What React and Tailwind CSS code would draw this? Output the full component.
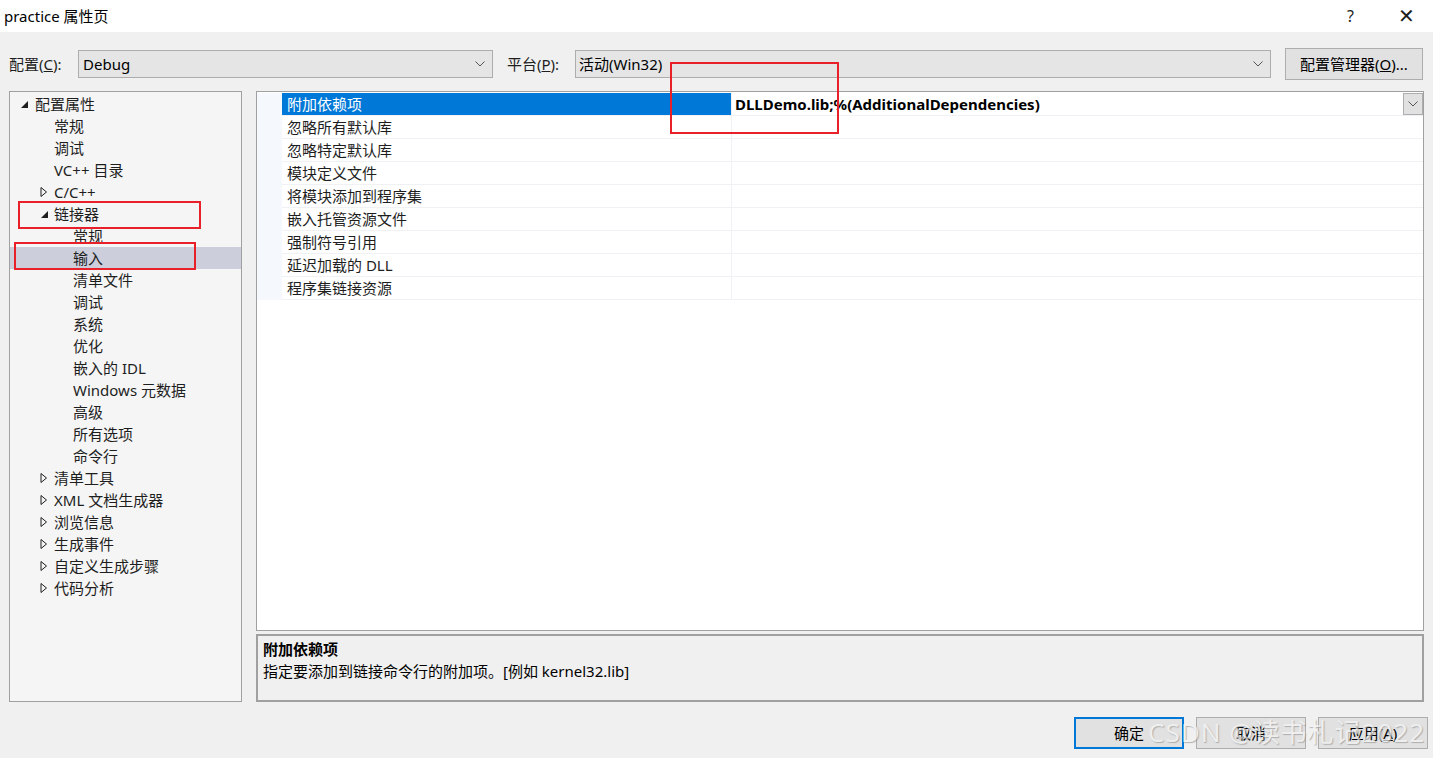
import React from 'react';

const font = { fontFamily: '"Noto Sans", "Noto Sans CJK SC", sans-serif' };

const Chevron = ({ className = '' }) => (
  <svg width="10" height="6" viewBox="0 0 10 6" className={className}>
    <path d="M0.5 0.5 L5 5 L9.5 0.5" fill="none" stroke="#555" strokeWidth="1" />
  </svg>
);

const Expanded = () => (
  <svg width="9" height="9" viewBox="0 0 9 9">
    <path d="M8 1 L8 8 L1 8 Z" fill="#1e1e1e" />
  </svg>
);

const Collapsed = () => (
  <svg width="8" height="10" viewBox="0 0 8 10">
    <path d="M1 0.5 L6.5 5 L1 9.5 Z" fill="none" stroke="#1e1e1e" strokeWidth="1" />
  </svg>
);

const tree = [
  { label: '配置属性', level: 0, icon: 'open' },
  { label: '常规', level: 1 },
  { label: '调试', level: 1 },
  { label: 'VC++ 目录', level: 1 },
  { label: 'C/C++', level: 1, icon: 'closed' },
  { label: '链接器', level: 1, icon: 'open' },
  { label: '常规', level: 2 },
  { label: '输入', level: 2, selected: true },
  { label: '清单文件', level: 2 },
  { label: '调试', level: 2 },
  { label: '系统', level: 2 },
  { label: '优化', level: 2 },
  { label: '嵌入的 IDL', level: 2 },
  { label: 'Windows 元数据', level: 2 },
  { label: '高级', level: 2 },
  { label: '所有选项', level: 2 },
  { label: '命令行', level: 2 },
  { label: '清单工具', level: 1, icon: 'closed' },
  { label: 'XML 文档生成器', level: 1, icon: 'closed' },
  { label: '浏览信息', level: 1, icon: 'closed' },
  { label: '生成事件', level: 1, icon: 'closed' },
  { label: '自定义生成步骤', level: 1, icon: 'closed' },
  { label: '代码分析', level: 1, icon: 'closed' },
];

const props = [
  '附加依赖项',
  '忽略所有默认库',
  '忽略特定默认库',
  '模块定义文件',
  '将模块添加到程序集',
  '嵌入托管资源文件',
  '强制符号引用',
  '延迟加载的 DLL',
  '程序集链接资源',
];

const TreeRow = ({ item }) => {
  const indent = item.level === 0 ? 'pl-[10px]' : item.level === 1 ? 'pl-[30px]' : 'pl-[49px]';
  return (
    <div className={`flex h-[22px] items-center ${indent} ${item.selected ? 'bg-[#cccedb]' : ''}`}>
      <span className="flex w-[13px] items-center">
        {item.icon === 'open' && <Expanded />}
        {item.icon === 'closed' && <Collapsed />}
      </span>
      <span className={`${item.level === 0 ? 'ml-[2px]' : 'ml-[1px]'} text-[15px] leading-none text-[#1e1e1e]`}>
        {item.label}
      </span>
    </div>
  );
};

const Button = ({ children, primary }) => (
  <button
    className={`h-[32px] w-[110px] text-[15px] text-black ${
      primary ? 'border-2 border-[#0078d7] bg-[#e1e1e1]' : 'border border-[#adadad] bg-[#e1e1e1]'
    }`}
  >
    {children}
  </button>
);

export default function App() {
  return (
    <div className="relative flex h-[758px] w-[1433px] flex-col overflow-hidden bg-[#f0f0f0]" style={font}>
      {/* title bar */}
      <div className="flex h-[32px] items-center bg-white pl-[4px] pr-[18px]">
        <span className="text-[15px] text-black">practice 属性页</span>
        <span className="ml-auto text-[16px] text-[#1e1e1e]">?</span>
        <span className="ml-[44px] text-[20px] font-light leading-none text-[#1e1e1e]">✕</span>
      </div>

      {/* config row */}
      <div className="mt-[16px] flex h-[32px] items-center pl-[9px] pr-[10px]">
        <span className="w-[69px] text-[15px] text-[#1e1e1e]">
          配置(<span className="underline">C</span>):
        </span>
        <div className="flex h-[28px] w-[415px] items-center border border-[#adadad] bg-[#e5e5e5] pl-[4px] pr-[7px]">
          <span className="text-[15px] text-black">Debug</span>
          <Chevron className="ml-auto" />
        </div>
        <span className="ml-[14px] w-[68px] text-[15px] text-[#1e1e1e]">
          平台(<span className="underline">P</span>):
        </span>
        <div className="flex h-[28px] w-[696px] items-center border border-[#adadad] bg-[#e5e5e5] pl-[3px] pr-[7px]">
          <span className="text-[15px] text-black">活动(Win32)</span>
          <Chevron className="ml-auto" />
        </div>
        <div className="ml-auto flex h-[32px] w-[138px] items-center justify-center border border-[#adadad] bg-[#e1e1e1] text-[15px] text-black">
          配置管理器(<span className="underline">O</span>)...
        </div>
      </div>

      {/* main */}
      <div className="mt-[11px] flex h-[611px] pl-[9px] pr-[9px]">
        <div className="w-[233px] border border-[#a0a0a0] bg-[#f5f5f5] pt-[1px]">
          {tree.map((item, i) => (
            <TreeRow key={i} item={item} />
          ))}
        </div>

        <div className="ml-[14px] flex flex-1 flex-col">
          <div className="h-[540px] border border-[#a0a0a0] bg-white pt-[1px]">
            <div className="flex">
              <div className="w-[25px] bg-[#f5f8fd]" />
              <div className="flex-1">
                {props.map((p, i) => (
                  <div key={i} className="flex h-[23px] border-b border-[#f0f1f4]">
                    <div
                      className={`flex w-[449px] items-center pl-[5px] text-[15px] ${
                        i === 0 ? 'bg-[#0078d7] text-white' : 'text-[#1e1e1e]'
                      }`}
                    >
                      {p}
                    </div>
                    <div className="flex flex-1 items-center border-l border-[#f0f1f4] pl-[3px]">
                      {i === 0 && (
                        <>
                          <span className="text-[15px] font-bold text-black">
                            DLLDemo.lib;%(AdditionalDependencies)
                          </span>
                          <div className="ml-auto flex h-[22px] w-[20px] items-center justify-center border border-[#adadad] bg-[#e1e1e1]">
                            <Chevron />
                          </div>
                        </>
                      )}
                    </div>
                  </div>
                ))}
              </div>
            </div>
          </div>
          <div className="mt-[3px] h-[68px] border-2 border-[#a0a0a0] bg-[#f0f0f0] pl-[5px] pt-[2px]">
            <div className="text-[15px] font-bold leading-[22px] text-black">附加依赖项</div>
            <div className="text-[15px] leading-[22px] text-black">指定要添加到链接命令行的附加项。[例如 kernel32.lib]</div>
          </div>
        </div>
      </div>

      {/* buttons */}
      <div className="mt-[15px] flex justify-end gap-[12px] pr-[5px]">
        <Button primary>确定</Button>
        <Button>取消</Button>
        <Button>应用(<span className="underline">A</span>)</Button>
      </div>

      {/* annotations */}
      <div className="pointer-events-none absolute left-[18px] top-[201px] h-[28px] w-[183px] border-2 border-[#e8202a]" />
      <div className="pointer-events-none absolute left-[14px] top-[242px] h-[28px] w-[182px] border-2 border-[#e8202a]" />
      <div className="pointer-events-none absolute left-[670px] top-[62px] h-[72px] w-[169px] border-2 border-[#e8202a]" />

      {/* watermark */}
      <div
        className="pointer-events-none absolute left-[1148px] top-[713px] text-[26px] tracking-[1px] text-[#f4f4f4] opacity-70"
        style={{ textShadow: '1px 1px 1px #999' }}
      >
        CSDN @读书札记2022
      </div>
    </div>
  );
}
